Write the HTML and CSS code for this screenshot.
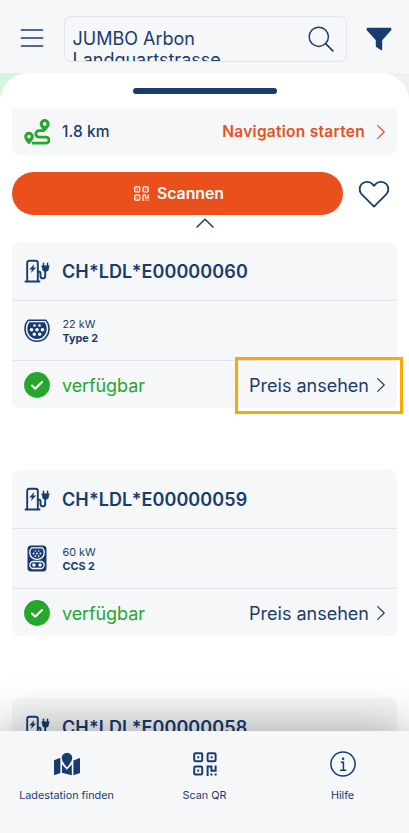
FILE: index.html
```html
<!DOCTYPE html>
<html lang="de">
<head>
<meta charset="utf-8">
<meta name="viewport" content="width=device-width, initial-scale=1">
<title>Ladestation</title>
<link rel="stylesheet" href="styles.css">
</head>
<body>
<svg class="defs" aria-hidden="true">
  <symbol id="pump" viewBox="0 0 26 24">
    <g fill="none" stroke="currentColor" stroke-width="1.9" stroke-linecap="round" stroke-linejoin="round">
      <path d="M1 22.5H15M2.7 22V4Q2.7 1.7 5 1.7H11Q13.3 1.7 13.3 4V22M13.3 12.5H14.2Q16 12.5 16 14.5V17Q16 19.4 18.3 19.4Q20.7 19.4 20.7 17V12"/>
      <path d="M19 4.2V7M23 4.2V7" stroke-width="1.6"/>
    </g>
    <path d="M17 6.5H25V8H24.4V9.2Q24.4 12.6 21 12.6Q17.6 12.6 17.6 9.2V8H17ZM9.8 4.8L4.8 10.6H7.4L6.5 14L11.6 8.6H8.8Z" fill="currentColor"/>
  </symbol>
  <symbol id="type2" viewBox="0 0 26 24">
    <path d="M4.2 1.3H21.8C24 3.6 25 6.7 25 9.8C25 17 19.7 22.3 13 22.3S1 17 1 9.8C1 6.7 2 3.6 4.2 1.3Z" fill="none" stroke="currentColor" stroke-width="1.6" stroke-linejoin="round"/>
    <path d="M5.5 3.2H20.5C22 5 22.7 7.3 22.7 9.8C22.7 15.7 18.5 20 13 20S3.3 15.7 3.3 9.8C3.3 7.3 4 5 5.5 3.2Z" fill="currentColor"/>
    <g fill="#f5f7f9"><circle cx="10.5" cy="6.5" r="1.3"/><circle cx="15.5" cy="6.5" r="1.3"/><circle cx="7.5" cy="10.8" r="1.8"/><circle cx="13" cy="10.8" r="1.8"/><circle cx="18.5" cy="10.8" r="1.8"/><circle cx="10.3" cy="15.2" r="1.7"/><circle cx="15.7" cy="15.2" r="1.7"/></g>
  </symbol>
  <symbol id="ccs" viewBox="0 0 20 27">
    <rect x=".5" y=".5" width="19" height="26" rx="3.5" fill="currentColor"/>
    <path d="M4.6 2.9H15.4Q17.2 4.6 17.2 7.4C17.2 11.6 14 14.4 10 14.4S2.8 11.6 2.8 7.4Q2.8 4.6 4.6 2.9Z" fill="none" stroke="#f5f7f9" stroke-width="1.3"/>
    <g fill="#f5f7f9"><circle cx="8.3" cy="6" r=".8"/><circle cx="11.7" cy="6" r=".8"/><circle cx="6.6" cy="8.5" r=".95"/><circle cx="10" cy="8.5" r=".95"/><circle cx="13.4" cy="8.5" r=".95"/><circle cx="8.3" cy="11.1" r=".9"/><circle cx="11.7" cy="11.1" r=".9"/></g>
    <rect x="2.9" y="16.5" width="14.2" height="7" rx="3.5" fill="none" stroke="#f5f7f9" stroke-width="1.3"/>
    <circle cx="6.9" cy="20" r="1.7" fill="#f5f7f9"/><circle cx="13.1" cy="20" r="1.7" fill="#f5f7f9"/>
  </symbol>
  <symbol id="check" viewBox="0 0 26 26">
    <circle cx="13" cy="13" r="12.9" fill="#26a72b"/>
    <path d="M8 13.6L11.2 16.7L18 10" fill="none" stroke="#fff" stroke-width="2.1" stroke-linecap="round" stroke-linejoin="round"/>
  </symbol>
  <symbol id="next" viewBox="0 0 8 14">
    <path d="M.7.6L7.2 7L.7 13.4" fill="none" stroke="currentColor" stroke-width="1.2" stroke-linecap="round" stroke-linejoin="round"/>
  </symbol>
  <symbol id="qr" viewBox="0 0 24 24">
    <g fill="none" stroke="currentColor" stroke-width="2">
      <rect x="1.2" y="1.2" width="8" height="8" rx="1.3"/><rect x="14.6" y="1.2" width="8" height="8" rx="1.3"/><rect x="1.2" y="14.6" width="8" height="8" rx="1.3"/>
      <path d="M14.6 24V14.6H18.4V18.8H22.6V13.6"/>
    </g>
    <path d="M4.2 4.2h2v2h-2zM17.6 4.2h2v2h-2zM4.2 17.6h2v2h-2zM17.4 21.6h2v2h-2zM21.6 21.6h2v2h-2z" fill="currentColor"/>
  </symbol>
</svg>

<div class="app">
  <header class="topbar">
    <svg class="menu" viewBox="0 0 24 20"><path d="M1.5 2H22.5M1.5 10H22.5M1.5 18H22.5" fill="none" stroke="currentColor" stroke-width="1.7" stroke-linecap="round"/></svg>
    <div class="search">
      <div class="query">JUMBO Arbon<br>Landquartstrasse</div>
      <svg class="lens" viewBox="0 0 27 27"><circle cx="11.2" cy="11.2" r="10" fill="none" stroke="currentColor" stroke-width="1.5"/><path d="M18.3 18.3L25.8 25.8" stroke="currentColor" stroke-width="1.7" stroke-linecap="round"/></svg>
    </div>
    <svg class="filter" viewBox="0 0 26 24"><path d="M1.7.7H24.3Q25.4.7 25.4 1.9V3L16.2 13.2V22.2Q16.2 23.6 14.8 23.1L10.3 19.9Q9.8 19.5 9.8 18.8V13.2L.6 3V1.9Q.6.7 1.7.7Z" fill="currentColor"/></svg>
  </header>

  <div class="map">
    <main class="sheet">
      <div class="handle"></div>
      <div class="route">
        <svg class="route-icon" viewBox="0 0 26 26">
          <path fill="#26a72b" fill-rule="evenodd" d="M20.7 0A5 5 0 0 1 25.7 5C25.7 8 20.7 12.5 20.7 12.5S15.7 8 15.7 5A5 5 0 0 1 20.7 0ZM20.7 3A1.9 1.9 0 1 0 20.7 6.8A1.9 1.9 0 0 0 20.7 3ZM5 12.8A4.8 4.8 0 0 1 9.8 17.6C9.8 21 5 25.6 5 25.6S.2 21 .2 17.6A4.8 4.8 0 0 1 5 12.8ZM5 15.8A1.8 1.8 0 1 0 5 19.4A1.8 1.8 0 0 0 5 15.8Z"/>
          <path d="M8 24.2H22A2.7 2.7 0 0 0 22 18.1H15A3.2 3.2 0 0 1 15 11.7H20.5" fill="none" stroke="#26a72b" stroke-width="2.8"/>
        </svg>
        <span class="distance">1.8 km</span>
        <a class="navigate">Navigation starten</a>
        <svg class="chevron orange"><use href="#next"/></svg>
      </div>
      <div class="actions">
        <button class="scan"><svg><use href="#qr"/></svg><span>Scannen</span></button>
        <svg class="heart" viewBox="0 0 32 28"><path d="M16 26.6L3.3 13.8A7.4 7.4 0 0 1 13.7 3.4L16 5.8L18.3 3.4A7.4 7.4 0 0 1 28.7 13.8Z" fill="none" stroke="currentColor" stroke-width="1.8" stroke-linejoin="round"/></svg>
      </div>
      <svg class="collapse" viewBox="0 0 18 10"><path d="M1 9L9 1.2L17 9" fill="none" stroke="currentColor" stroke-width="1.5" stroke-linecap="round" stroke-linejoin="round"/></svg>

      <section class="card">
        <div class="row title"><svg class="pump"><use href="#pump"/></svg><h2>CH*LDL*E00000060</h2></div>
        <div class="row plug"><svg class="connector"><use href="#type2"/></svg><div class="spec"><span>22 kW</span><b>Type 2</b></div></div>
        <div class="row status"><svg class="check"><use href="#check"/></svg><span class="state">verfügbar</span><a class="price">Preis ansehen</a><svg class="chevron"><use href="#next"/></svg></div>
        <div class="highlight"></div>
      </section>

      <section class="card">
        <div class="row title"><svg class="pump"><use href="#pump"/></svg><h2>CH*LDL*E00000059</h2></div>
        <div class="row plug"><svg class="connector ccs"><use href="#ccs"/></svg><div class="spec"><span>60 kW</span><b>CCS 2</b></div></div>
        <div class="row status"><svg class="check"><use href="#check"/></svg><span class="state">verfügbar</span><a class="price">Preis ansehen</a><svg class="chevron"><use href="#next"/></svg></div>
      </section>

      <section class="card">
        <div class="row title"><svg class="pump"><use href="#pump"/></svg><h2>CH*LDL*E00000058</h2></div>
      </section>
    </main>
  </div>

  <nav class="tabs">
    <a class="tab">
      <svg viewBox="0 0 26 24"><path fill="currentColor" d="M0 8.2L6.4 5.8V21L1 23Q0 23.3 0 22.3ZM8 12.6L12.9 17.8L17.8 12.6V23.2L8 20.8ZM19.4 8.6L25 6.2Q26 5.8 26 6.9V21L19.4 23.3Z"/><path fill="currentColor" stroke="#f5f7f9" stroke-width="1.2" d="M13 .2A5.9 5.9 0 0 1 18.9 6.1C18.9 9.7 13 16.3 13 16.3S7.1 9.7 7.1 6.1A5.9 5.9 0 0 1 13 .2Z"/></svg>
      <span>Ladestation finden</span>
    </a>
    <a class="tab"><svg class="qr"><use href="#qr"/></svg><span>Scan QR</span></a>
    <a class="tab">
      <svg class="info" viewBox="0 0 26 26"><circle cx="13" cy="13" r="12.1" fill="none" stroke="currentColor" stroke-width="1.5"/><path d="M10.8 11.3H13.4V19M10 19.2H16.2" fill="none" stroke="currentColor" stroke-width="1.5"/><circle cx="13.1" cy="7.8" r="1.3" fill="currentColor"/></svg>
      <span>Hilfe</span>
    </a>
  </nav>
</div>
</body>
</html>
```
FILE: styles.css
```css
* { box-sizing: border-box; }
body { margin: 0; font-family: Inter, "Liberation Sans", sans-serif; color: #193c70; background: #fff; }
svg { display: block; flex: none; }
.defs { position: absolute; width: 0; height: 0; }
.app { display: flex; flex-direction: column; height: 833px; overflow: hidden; }

.topbar { flex: none; display: flex; height: 73px; padding: 16px 0 0 20px; background: #f5f7f9; }
.menu { width: 24px; height: 20px; margin-top: 12px; }
.search { display: flex; width: 282.5px; height: 46px; margin-left: 20px; padding: 11px 12px 0 7.5px; border: 1px solid #e0e4ed; border-radius: 7px; overflow: hidden; }
.query { flex: 1; height: 34px; overflow: hidden; font-size: 18px; line-height: 21px; letter-spacing: 0; }
.lens { width: 26px; height: 26px; margin-top: -2px; }
.filter { width: 26px; height: 24px; margin: 11px 0 0 19px; }

.map { flex: 1; min-height: 0; background: linear-gradient(90deg, #d2f7e0 50%, #f2eff0 50%); }
.sheet { height: 100%; padding: 15px 12px 0; background: #fff; border-radius: 28px 28px 0 0; overflow: hidden; }
.handle { width: 144px; height: 6px; margin: 0 auto; border-radius: 3px; background: #193c70; }
.route { display: flex; align-items: center; height: 47px; margin-top: 14px; padding: 0 12px; background: #f5f7f9; border-radius: 0 0 8px 8px; }
.route-icon { width: 26px; height: 26px; }
.distance { margin-left: 12px; font-size: 15.5px; font-weight: 500; letter-spacing: .1px; }
.navigate { margin-left: auto; font-size: 15.5px; font-weight: 600; letter-spacing: .27px; color: #e9501c; }
.chevron { width: 8px; height: 14px; margin-left: 12px; }
.chevron.orange { color: #e9501c; }
.actions { display: flex; align-items: center; margin-top: 17px; }
.scan { display: flex; align-items: center; justify-content: center; gap: 8px; width: 331px; height: 43px; padding: 0 0 0 3px; border: 0; border-radius: 22px; background: #e9501c; color: #fff; font: 600 15.8px Inter, "Liberation Sans", sans-serif; }
.scan svg { width: 15px; height: 15px; }
.heart { width: 32px; height: 28px; margin-left: 15px; }
.collapse { width: 18px; height: 10px; margin: 3px auto 14px; }

.card { position: relative; height: 166px; margin-bottom: 62px; background: #f5f7f9; border-radius: 8px; }
.row { display: flex; align-items: center; padding: 0 12px; }
.title { height: 58px; }
.pump { width: 27px; height: 24px; }
h2 { margin: 0 0 0 11px; font-size: 18px; font-weight: 600; letter-spacing: .1px; }
.plug { height: 61px; border-top: 1px solid #e2e5ed; border-bottom: 1px solid #e2e5ed; }
.connector { width: 26px; height: 24px; }
.connector.ccs { width: 20px; height: 27px; margin: 0 3px; }
.spec { display: flex; flex-direction: column; margin: 3px 0 0 12.5px; font-size: 10.8px; line-height: 14.5px; }
.status { height: 48px; }
.check { width: 26px; height: 26px; }
.state { margin-left: 12px; font-size: 18px; letter-spacing: -.1px; color: #26a72b; }
.price { margin-left: auto; font-size: 18px; }
.status .chevron { margin-left: 8px; }
.highlight { position: absolute; top: 115px; left: 223px; width: 168px; height: 57px; border: 3px solid #ffa800; }

.tabs { position: relative; flex: none; display: grid; grid-template-columns: repeat(3, 138px); justify-content: center; height: 102px; background: #f5f7f9; box-shadow: 0 0 50px rgba(0, 0, 0, .38); }
.tab { display: flex; flex-direction: column; align-items: center; font-size: 10.8px; }
.tab svg { width: 26px; height: 24px; margin: 21px 0 13px; }
.tab .qr { width: 24px; }
.tab .info { height: 26px; margin: 20px 0 12px; }
```
